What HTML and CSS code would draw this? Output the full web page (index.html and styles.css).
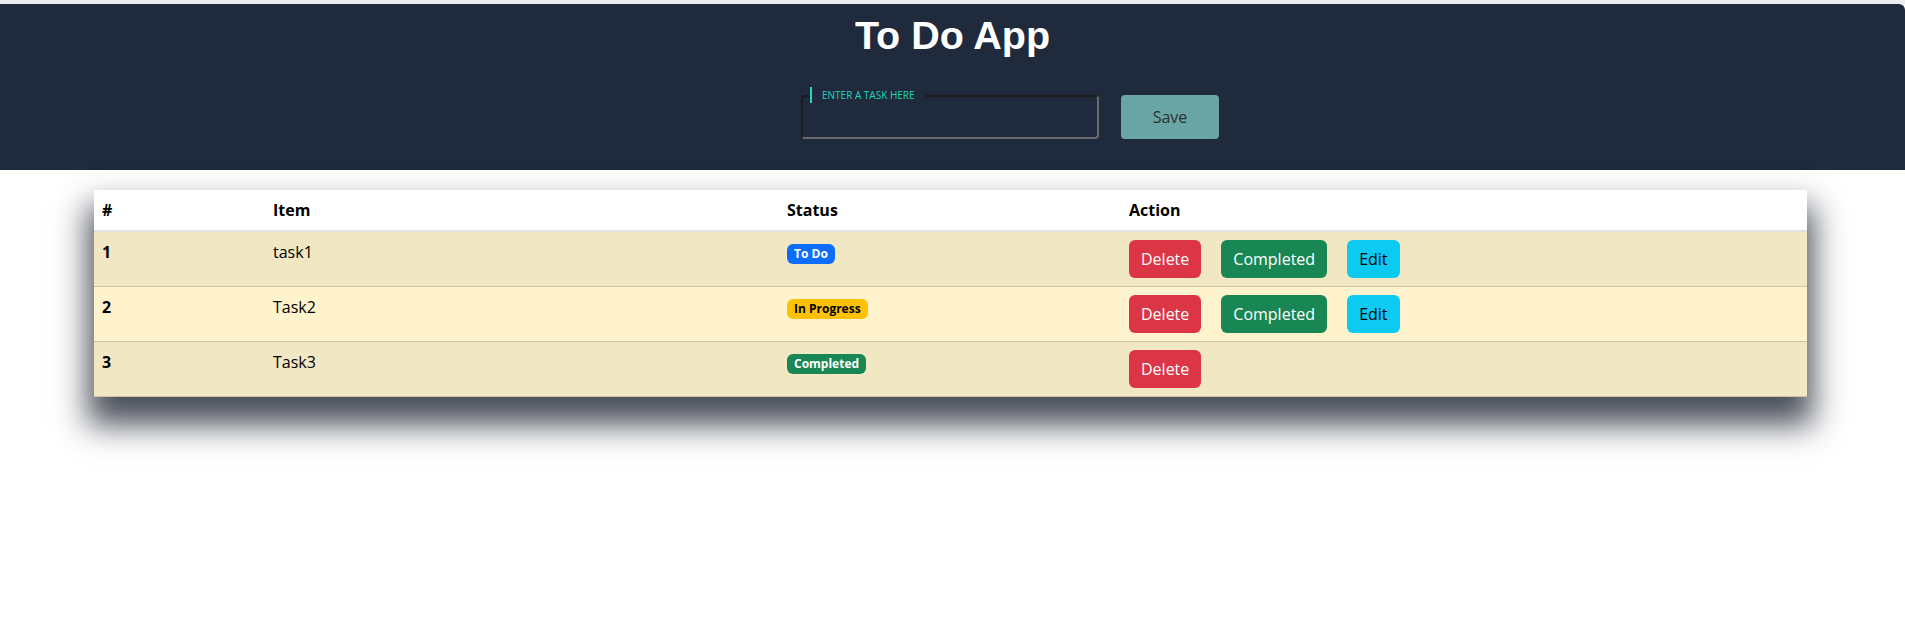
FILE: index.html
```html
<!DOCTYPE html>
<html lang="en">
<head>
<meta charset="utf-8">
<title>To Do App</title>
<link rel="stylesheet" href="styles.css">
</head>
<body>
<div class="page">
  <header class="app-header">
    <h1 class="app-title">To Do App</h1>
    <form class="task-form">
      <div class="field">
        <input class="field-input" type="text">
        <label class="field-label">Enter a task here</label>
      </div>
      <button class="save-btn" type="button">Save</button>
    </form>
  </header>

  <div class="table-wrap">
    <table class="task-table">
      <colgroup>
        <col class="col-num">
        <col class="col-item">
        <col class="col-status">
        <col class="col-action">
      </colgroup>
      <thead>
        <tr>
          <th>#</th>
          <th>Item</th>
          <th>Status</th>
          <th>Action</th>
        </tr>
      </thead>
      <tbody>
        <tr class="row-odd">
          <th>1</th>
          <td>task1</td>
          <td><span class="badge badge-todo">To Do</span></td>
          <td class="actions"><button class="btn btn-danger">Delete</button><button class="btn btn-success">Completed</button><button class="btn btn-info">Edit</button></td>
        </tr>
        <tr class="row-even">
          <th>2</th>
          <td>Task2</td>
          <td><span class="badge badge-progress">In Progress</span></td>
          <td class="actions"><button class="btn btn-danger">Delete</button><button class="btn btn-success">Completed</button><button class="btn btn-info">Edit</button></td>
        </tr>
        <tr class="row-odd">
          <th>3</th>
          <td>Task3</td>
          <td><span class="badge badge-done">Completed</span></td>
          <td class="actions"><button class="btn btn-danger">Delete</button></td>
        </tr>
      </tbody>
    </table>
  </div>
</div>
</body>
</html>
```
FILE: styles.css
```css
* { box-sizing: border-box; }

html, body {
  margin: 0;
  padding: 0;
  background: #ffffff;
}

body {
  font-family: "Open Sans", "Noto Sans", sans-serif;
  font-size: 16px;
  line-height: 1.5;
  color: #212529;
}

.page {
  border-top: 4px solid #eeeeee;
  min-height: 100vh;
  padding-bottom: 80px;
}

.app-header {
  background: #1f2a3c;
  border-top-right-radius: 6px;
  padding: 7px 0 31px;
}

.app-title {
  margin: 0;
  text-align: center;
  color: #ffffff;
  font-family: "Liberation Sans", Arial, sans-serif;
  font-weight: 700;
  font-size: 39.5px;
  line-height: 48px;
}

.task-form {
  display: grid;
  grid-template-columns: 1fr auto 1fr;
  align-items: center;
  margin-top: 36px;
}

.field {
  grid-column: 2;
  position: relative;
  width: 298px;
  height: 44px;
  margin-left: -5px;
}

.field-input {
  display: block;
  width: 100%;
  height: 100%;
  background: transparent;
  border: 2px solid;
  border-color: #1c1c1c #6b6b6b #6b6b6b #1c1c1c;
  border-radius: 4px;
  color: #ffffff;
  font: inherit;
  padding: 8px 12px 0;
  outline: none;
}

.field-label {
  position: absolute;
  left: 9px;
  top: -8px;
  height: 16px;
  padding: 0 10px;
  border-left: 2px solid #1fd6b8;
  background: #1f2a3c;
  color: #1fd6b8;
  font-size: 10px;
  line-height: 16px;
  text-transform: uppercase;
}

.save-btn {
  grid-column: 3;
  justify-self: start;
  margin-left: 22px;
  width: 98px;
  height: 44px;
  border: none;
  border-radius: 4px;
  background: #68a5a4;
  color: #2b3236;
  font: inherit;
  font-size: 16px;
}

.table-wrap {
  margin: 20px 98px 0 94px;
  box-shadow: 0 22px 30px 6px rgba(35, 42, 55, 0.82);
}

.task-table {
  width: 100%;
  border-collapse: collapse;
  table-layout: fixed;
  background: #ffffff;
}

.col-num { width: 171px; }
.col-item { width: 514px; }
.col-status { width: 342px; }

.task-table th,
.task-table td {
  text-align: left;
  vertical-align: top;
  padding: 8px;
  color: #000000;
}

.task-table th { font-weight: 700; }

.task-table thead th {
  border-bottom: 2px solid #dee2e6;
}

.task-table tbody tr { border-bottom: 1px solid #ccc2a4; }

.row-odd { background: #f2e7c3; }
.row-even { background: #fff3cd; }

.badge {
  display: inline-block;
  padding: 4px 7px;
  font-size: 12px;
  font-weight: 700;
  line-height: 1;
  border-radius: 6px;
  vertical-align: baseline;
  margin-top: 4px;
}

.badge-todo { background: #0d6efd; color: #ffffff; }
.badge-progress { background: #ffc107; color: #000000; }
.badge-done { background: #198754; color: #ffffff; }

.actions {
  display: flex;
  gap: 20px;
}

.btn {
  height: 38px;
  padding: 6px 12px;
  border: none;
  border-radius: 6px;
  font: inherit;
  font-size: 16px;
  line-height: 24px;
}

.btn-danger { background: #dc3545; color: #ffffff; }
.btn-success { background: #198754; color: #ffffff; }
.btn-info { background: #0dcaf0; color: #000000; }
```
